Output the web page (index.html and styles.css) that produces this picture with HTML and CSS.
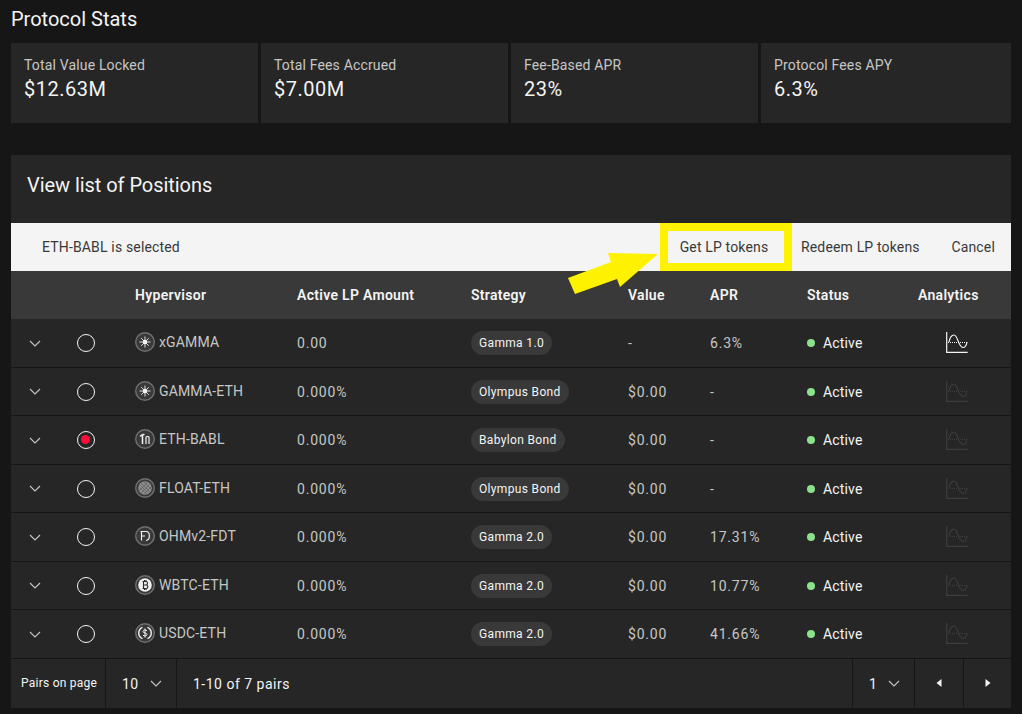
FILE: index.html
```html
<!DOCTYPE html>
<html lang="en">
<head>
  <meta charset="UTF-8">
  <title>Protocol Stats</title>
  <link rel="stylesheet" href="styles.css">
</head>
<body>
  <svg class="defs" width="0" height="0">
    <symbol id="chev" viewBox="0 0 12 7"><path d="M1 1l5 5 5-5" fill="none" stroke="currentColor" stroke-width="1.1"/></symbol>
    <symbol id="chart" viewBox="0 0 22 22">
      <path d="M.7 0v20.400h21" fill="none" stroke="currentColor" stroke-width="1.200"/>
      <path d="M3 10C4 5 6 3 8 3c4 0 4 12 9 12.500 2 0 3.500-2.500 4-5.500" fill="none" stroke="currentColor" stroke-width="1.200"/>
      <path d="M2 10.500h20" fill="none" stroke="currentColor" stroke-width="1" stroke-dasharray="1 1"/>
    </symbol>
    <symbol id="star" viewBox="0 0 20 20">
      <circle cx="10" cy="10" r="9.300" fill="#393939" stroke="#707070" stroke-width="1.400"/>
      <path d="M10 4.500v11M4.500 10h11M6.200 6.200l7.600 7.600M13.800 6.200l-7.600 7.600" stroke="#e0e0e0" stroke-width="1"/>
      <circle cx="10" cy="10" r="2.200" fill="#f4f4f4"/>
    </symbol>
  </svg>

  <h1 class="page-title">Protocol Stats</h1>
  <div class="stats">
    <div class="stat"><div class="stat-label">Total Value Locked</div><div class="stat-value">$12.63M</div></div>
    <div class="stat"><div class="stat-label">Total Fees Accrued</div><div class="stat-value">$7.00M</div></div>
    <div class="stat"><div class="stat-label">Fee-Based APR</div><div class="stat-value">23%</div></div>
    <div class="stat"><div class="stat-label">Protocol Fees APY</div><div class="stat-value">6.3%</div></div>
  </div>

  <div class="panel">
    <h2 class="panel-title">View list of Positions</h2>
    <div class="batch">
      <span class="batch-msg">ETH-BABL is selected</span>
      <div class="batch-actions">
        <button class="batch-btn highlighted">Get LP tokens</button>
        <button class="batch-btn redeem">Redeem LP tokens</button>
        <button class="batch-btn cancel">Cancel</button>
      </div>
      <svg class="arrow" width="100" height="50" viewBox="0 0 100 50"><polygon points="8,33 51,17 48,8 98,9 60,42 57,34 15,49" fill="#fff200"/></svg>
    </div>

    <table class="positions">
      <colgroup>
        <col class="c-exp"><col class="c-radio"><col class="c-name"><col class="c-lp"><col class="c-strat"><col class="c-val"><col class="c-apr"><col class="c-status"><col>
      </colgroup>
      <thead>
        <tr><th></th><th></th><th>Hypervisor</th><th>Active LP Amount</th><th>Strategy</th><th>Value</th><th>APR</th><th>Status</th><th>Analytics</th></tr>
      </thead>
      <tbody>
        <tr>
          <td class="exp"><svg class="chev"><use href="#chev"/></svg></td>
          <td><span class="radio"></span></td>
          <td><div class="pair"><svg class="token"><use href="#star"/></svg>xGAMMA</div></td>
          <td class="num">0.00</td>
          <td><span class="pill">Gamma 1.0</span></td>
          <td class="num">-</td>
          <td class="num">6.3%</td>
          <td><span class="status"><i class="dot"></i>Active</span></td>
          <td><svg class="chart on"><use href="#chart"/></svg></td>
        </tr>
        <tr>
          <td class="exp"><svg class="chev"><use href="#chev"/></svg></td>
          <td><span class="radio"></span></td>
          <td><div class="pair"><svg class="token"><use href="#star"/></svg>GAMMA-ETH</div></td>
          <td class="num">0.000%</td>
          <td><span class="pill">Olympus Bond</span></td>
          <td class="num">$0.00</td>
          <td class="num">-</td>
          <td><span class="status"><i class="dot"></i>Active</span></td>
          <td><svg class="chart"><use href="#chart"/></svg></td>
        </tr>
        <tr>
          <td class="exp"><svg class="chev"><use href="#chev"/></svg></td>
          <td><span class="radio checked"></span></td>
          <td><div class="pair">
            <svg class="token" viewBox="0 0 20 20"><circle cx="10" cy="10" r="9.300" fill="#393939" stroke="#707070" stroke-width="1.400"/><path d="M7.500 5.500V15M7.500 5.500L5 7.500M7.500 5.500h2" fill="none" stroke="#f4f4f4" stroke-width="1.500"/><path d="M11 15V8.500c0-1.500 3-1.500 3 0V15" fill="none" stroke="#e0e0e0" stroke-width="1.300"/></svg>ETH-BABL</div></td>
          <td class="num">0.000%</td>
          <td><span class="pill">Babylon Bond</span></td>
          <td class="num">$0.00</td>
          <td class="num">-</td>
          <td><span class="status"><i class="dot"></i>Active</span></td>
          <td><svg class="chart"><use href="#chart"/></svg></td>
        </tr>
        <tr>
          <td class="exp"><svg class="chev"><use href="#chev"/></svg></td>
          <td><span class="radio"></span></td>
          <td><div class="pair">
            <svg class="token" viewBox="0 0 20 20"><circle cx="10" cy="10" r="9.300" fill="#393939" stroke="#707070" stroke-width="1.400"/><circle cx="10" cy="10" r="6.800" fill="#8d8d8d"/><path d="M5 7l8 8M5 10l6 6M6 5l9 9M9 4l7 7M13 4l-9 9M15 6l-9 9M16 9l-6 6" stroke="#555" stroke-width=".6"/></svg>FLOAT-ETH</div></td>
          <td class="num">0.000%</td>
          <td><span class="pill">Olympus Bond</span></td>
          <td class="num">$0.00</td>
          <td class="num">-</td>
          <td><span class="status"><i class="dot"></i>Active</span></td>
          <td><svg class="chart"><use href="#chart"/></svg></td>
        </tr>
        <tr>
          <td class="exp"><svg class="chev"><use href="#chev"/></svg></td>
          <td><span class="radio"></span></td>
          <td><div class="pair">
            <svg class="token" viewBox="0 0 20 20"><circle cx="10" cy="10" r="9.300" fill="#393939" stroke="#707070" stroke-width="1.400"/><path d="M5.500 5.500h5.500M6.500 5.500V14.500M6.500 10h3.500M11 5.500c4.500 0 4.500 8.500 0 9" fill="none" stroke="#f0f0f0" stroke-width="1.200"/></svg>OHMv2-FDT</div></td>
          <td class="num">0.000%</td>
          <td><span class="pill">Gamma 2.0</span></td>
          <td class="num">$0.00</td>
          <td class="num">17.31%</td>
          <td><span class="status"><i class="dot"></i>Active</span></td>
          <td><svg class="chart"><use href="#chart"/></svg></td>
        </tr>
        <tr>
          <td class="exp"><svg class="chev"><use href="#chev"/></svg></td>
          <td><span class="radio"></span></td>
          <td><div class="pair">
            <svg class="token" viewBox="0 0 20 20"><circle cx="10" cy="10" r="9.300" fill="#393939" stroke="#707070" stroke-width="1.400"/><circle cx="10" cy="10" r="6.800" fill="#f0f0f0"/><path d="M8.500 6.500v7M7.500 6.500H11c2 0 2 3.500 0 3.500H8.500M11 10c2.500 0 2.500 3.500 0 3.500H7.500M9.500 5v1.500M11 5v1.500M9.500 13.500V15M11 13.500V15" fill="none" stroke="#2a2a2a" stroke-width="1.100"/></svg>WBTC-ETH</div></td>
          <td class="num">0.000%</td>
          <td><span class="pill">Gamma 2.0</span></td>
          <td class="num">$0.00</td>
          <td class="num">10.77%</td>
          <td><span class="status"><i class="dot"></i>Active</span></td>
          <td><svg class="chart"><use href="#chart"/></svg></td>
        </tr>
        <tr>
          <td class="exp"><svg class="chev"><use href="#chev"/></svg></td>
          <td><span class="radio"></span></td>
          <td><div class="pair">
            <svg class="token" viewBox="0 0 20 20"><circle cx="10" cy="10" r="9.300" fill="#393939" stroke="#707070" stroke-width="1.400"/><path d="M7.500 4.300a6.200 6.200 0 0 0 0 11.400M12.500 4.300a6.200 6.200 0 0 1 0 11.400" fill="none" stroke="#f4f4f4" stroke-width="1.400"/><path d="M12 7.800c-.8-1-4-1.200-4 .7s4 1.100 4 3c0 1.900-3.200 1.700-4 .7M10 5.500v9" fill="none" stroke="#f4f4f4"/></svg>USDC-ETH</div></td>
          <td class="num">0.000%</td>
          <td><span class="pill">Gamma 2.0</span></td>
          <td class="num">$0.00</td>
          <td class="num">41.66%</td>
          <td><span class="status"><i class="dot"></i>Active</span></td>
          <td><svg class="chart"><use href="#chart"/></svg></td>
        </tr>
      </tbody>
    </table>

    <div class="pager">
      <span class="pager-label">Pairs on page</span>
      <div class="pager-select size">10<svg class="chev"><use href="#chev"/></svg></div>
      <span class="pager-range">1-10 of 7 pairs</span>
      <div class="pager-select page">1<svg class="chev"><use href="#chev"/></svg></div>
      <button class="pager-btn prev"><svg width="8" height="10" viewBox="0 0 8 10"><path d="M6.500 1v8L1.500 5z" fill="#f4f4f4"/></svg></button>
      <button class="pager-btn next"><svg width="8" height="10" viewBox="0 0 8 10"><path d="M1.500 1v8l5-4z" fill="#f4f4f4"/></svg></button>
    </div>
  </div>
</body>
</html>
```

FILE: styles.css
```css
* {
  box-sizing: border-box;
}
body {
  margin: 0;
  padding: 0 11px 6px;
  height: 714px;
  overflow: hidden;
  background: #161616;
  color: #f4f4f4;
  font-family: Roboto, "Noto Sans", sans-serif;
  font-size: 14px;
  letter-spacing: 0.16px;
}
.defs {
  position: absolute;
}
.page-title {
  margin: 0;
  height: 43px;
  padding-top: 6px;
  font-size: 20px;
  line-height: 26px;
  font-weight: 400;
  letter-spacing: 0;
}
.stats {
  display: grid;
  grid-template-columns: 247px 247px 247px 1fr;
  gap: 3px;
  height: 80px;
}
.stat {
  background: #262626;
  padding: 13px;
}
.stat-label {
  color: #c6c6c6;
  line-height: 18px;
}
.stat-value {
  margin-top: 2px;
  font-size: 20px;
  line-height: 26px;
  letter-spacing: 0.5px;
}
.panel {
  margin-top: 32px;
  background: #262626;
}
.panel-title {
  margin: 0;
  height: 68px;
  padding: 17px 16px 0;
  font-size: 20px;
  line-height: 26px;
  font-weight: 400;
  letter-spacing: -0.05px;
}
.batch {
  position: relative;
  display: flex;
  justify-content: space-between;
  align-items: center;
  height: 48px;
  padding-left: 31px;
  background: #f4f4f4;
  color: #393939;
  font-size: 14px;
}
.batch-actions {
  display: flex;
  height: 48px;
}
.batch-btn {
  border: none;
  background: none;
  padding: 0 16px;
  color: #393939;
  font: inherit;
  letter-spacing: inherit;
}
.batch-btn.highlighted {
  width: 132px;
  border: 8px solid #fff200;
  padding: 0 4px 0 0;
}
.batch-btn.redeem {
  width: 143px;
  padding-left: 9px;
  padding-right: 0;
  text-align: left;
}
.batch-btn.cancel {
  width: 76px;
  text-align: right;
}
.arrow {
  position: absolute;
  left: 549px;
  top: 22px;
}
.positions {
  width: 100%;
  border-collapse: separate;
  border-spacing: 0;
  table-layout: fixed;
}
.c-exp { width: 50px; }
.c-radio { width: 58px; }
.c-name { width: 162px; }
.c-lp { width: 174px; }
.c-strat { width: 157px; }
.c-val { width: 82px; }
.c-apr { width: 97px; }
.c-status { width: 111px; }
.positions th {
  height: 48px;
  padding: 0 0 0 16px;
  background: #393939;
  text-align: left;
  font-weight: 600;
  letter-spacing: 0.3px;
}
.positions td {
  height: 48px;
  padding: 0 0 0 16px;
  border-bottom: 1px solid #161616;
  color: #c6c6c6;
}
.positions tbody tr:nth-child(odd) td {
  height: 49px;
}
.positions td.num {
  letter-spacing: 0.8px;
}
.positions td.exp {
  padding-left: 18px;
}
.chev {
  display: block;
  width: 12px;
  height: 7px;
  color: #c6c6c6;
}
.radio {
  display: block;
  width: 18px;
  height: 18px;
  border: 1px solid #f4f4f4;
  border-radius: 50%;
}
.radio.checked {
  border-width: 1.500px;
  padding: 3px;
}
.radio.checked::after {
  content: "";
  display: block;
  width: 9px;
  height: 9px;
  border-radius: 50%;
  background: #fa0f3c;
}
.pair {
  display: flex;
  align-items: center;
  gap: 4px;
  margin-top: -2px;
}
.token {
  width: 20px;
  height: 20px;
  flex: none;
}
.pill {
  display: inline-block;
  height: 24px;
  padding: 0 8px;
  border-radius: 12px;
  background: #393939;
  color: #f4f4f4;
  font-size: 12px;
  line-height: 24px;
  letter-spacing: 0.34px;
}
.status {
  display: flex;
  align-items: center;
  color: #f4f4f4;
}
.dot {
  width: 8px;
  height: 8px;
  margin-right: 8px;
  border-radius: 50%;
  background: #8be28b;
}
.chart {
  display: block;
  width: 22px;
  height: 22px;
  margin-left: 28px;
  color: #3d3d3d;
}
.chart.on {
  color: #f4f4f4;
}
.pager {
  display: flex;
  align-items: center;
  height: 49px;
}
.pager-label {
  width: 95px;
  height: 100%;
  padding-left: 10px;
  font-size: 12px;
  line-height: 49px;
  border-right: 1px solid #161616;
  letter-spacing: 0.24px;
}
.pager-select {
  display: flex;
  align-items: center;
  justify-content: space-between;
  height: 100%;
  padding: 0 14px 0 16px;
  letter-spacing: 0.5px;
}
.pager-select.size {
  width: 71px;
  border-right: 1px solid #161616;
}
.pager-range {
  margin-right: auto;
  padding-left: 16px;
  letter-spacing: 0.5px;
}
.pager-select.page {
  width: 62px;
  border-left: 1px solid #161616;
}
.pager-btn {
  height: 100%;
  border: none;
  background: none;
  padding: 0;
  border-left: 1px solid #161616;
}
.pager-btn.prev {
  width: 49px;
}
.pager-btn.next {
  width: 48px;
}
```
